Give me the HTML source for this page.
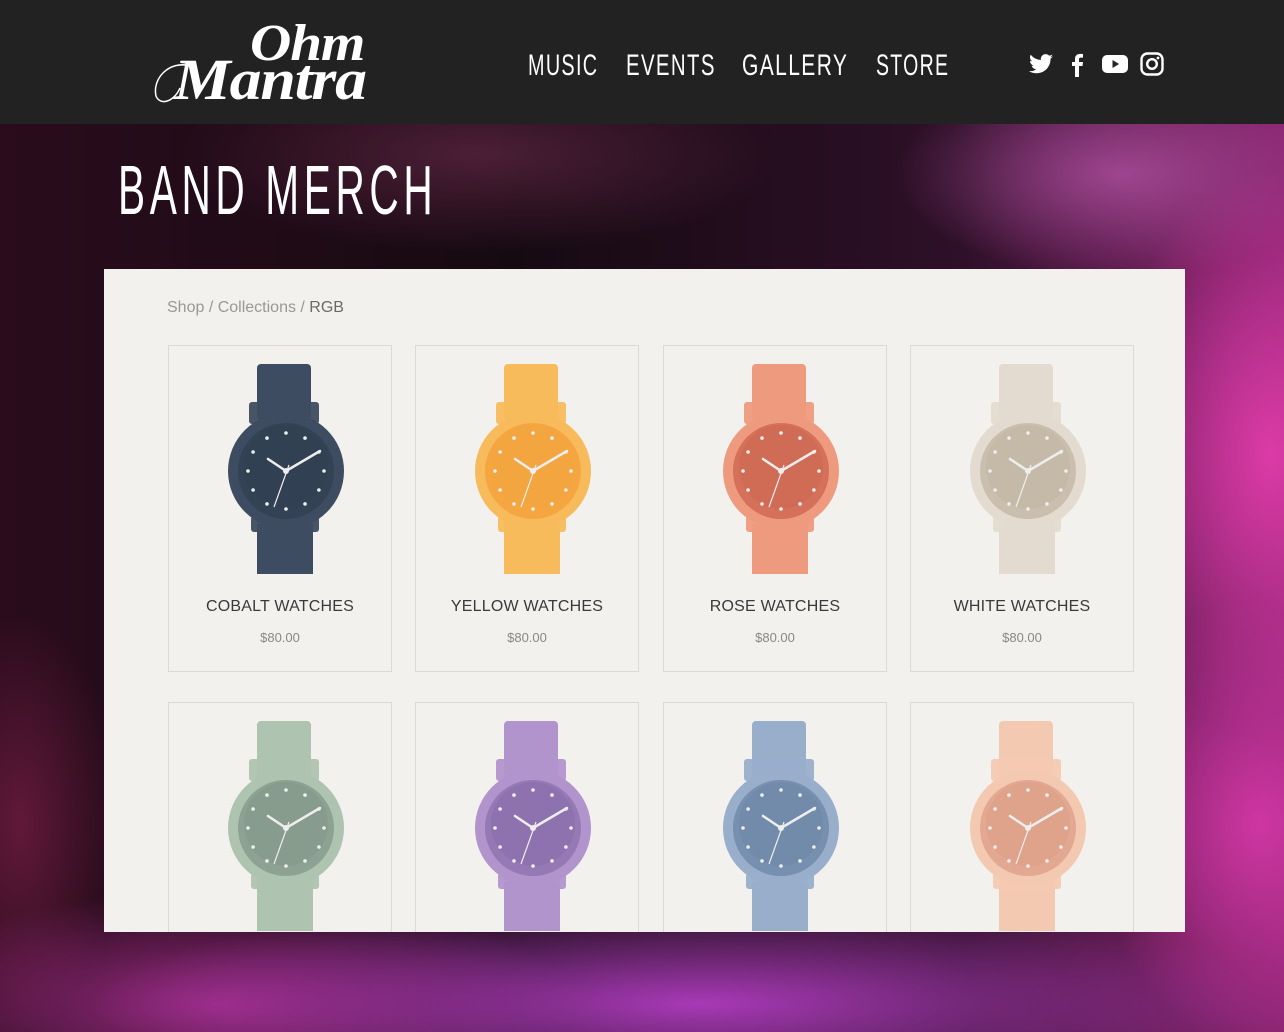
<!DOCTYPE html>
<html><head><meta charset="utf-8">
<style>
*{margin:0;padding:0;box-sizing:border-box}
html,body{width:1284px;height:1032px;overflow:hidden}
body{position:relative;background:#1a0d14;font-family:"Liberation Sans",sans-serif}
#bg{position:absolute;left:0;top:124px;width:1284px;height:908px;
background:
radial-gradient(ellipse 220px 380px at 1270px 330px,rgba(225,60,170,.95),transparent 75%),
radial-gradient(ellipse 220px 300px at 1260px 700px,rgba(210,55,165,.95),transparent 75%),
radial-gradient(ellipse 760px 130px at 700px 880px,rgba(175,60,190,.95),transparent 80%),
radial-gradient(ellipse 450px 140px at 220px 880px,rgba(165,45,140,.9),transparent 80%),
radial-gradient(ellipse 320px 150px at 1120px 50px,rgba(175,80,160,.8),transparent 70%),
radial-gradient(ellipse 400px 130px at 480px 30px,rgba(100,40,70,.7),transparent 75%),
radial-gradient(ellipse 140px 300px at 20px 700px,rgba(120,30,70,.7),transparent 70%),
linear-gradient(90deg,#2a0c1c 0%,#160a12 40%,#2e1028 75%,#8a2470 100%);}
#hdr{position:absolute;left:0;top:0;width:1284px;height:124px;background:#232223}
.logo{position:absolute;color:#fff;font-family:"Liberation Serif",serif;font-style:italic;font-weight:bold;transform-origin:0 0}
.nav{position:absolute;top:49px;color:#fff;font-family:"Liberation Sans",sans-serif;font-size:30px;transform-origin:0 0;letter-spacing:2px}
#title{position:absolute;left:118px;top:150px;color:#fff;font-family:"Liberation Sans",sans-serif;font-size:70px;letter-spacing:8px;transform-origin:0 0;transform:scaleX(.58)}
#panel{position:absolute;left:104px;top:269px;width:1081px;height:663px;background:#f3f1ed;overflow:hidden}
#crumb{position:absolute;left:63px;top:30px;font-size:16px;color:#9a9894}
#crumb b{font-weight:normal;color:#6b6a67}
.card{position:absolute;width:224px;height:327px;border:1.5px solid #dcdad6}
.card svg{position:absolute;left:0;top:0}
.nm{position:absolute;left:0;width:100%;top:252px;text-align:center;font-size:16px;color:#3a3a3a;letter-spacing:.2px}
.pr{position:absolute;left:0;width:100%;top:284px;text-align:center;font-size:13px;color:#8a8884}
</style></head><body>
<div id="hdr">
  <div class="logo" style="left:250px;top:14px;font-size:52px;letter-spacing:-1px;transform:scaleX(1.1)">Ohm</div>
  <div class="logo" style="left:174px;top:46px;font-size:58px;letter-spacing:-1px;transform:scaleX(1.1)">Mantra</div>
  <svg style="position:absolute;left:150px;top:58px" width="50" height="50"><path d="M40 8 C20 2 2 20 6 38 C10 48 24 44 30 30" fill="none" stroke="#fff" stroke-width="1.5"/></svg>
  <div class="nav" style="left:528px;transform:scaleX(.66)">MUSIC</div>
  <div class="nav" style="left:626px;transform:scaleX(.68)">EVENTS</div>
  <div class="nav" style="left:742px;transform:scaleX(.7)">GALLERY</div>
  <div class="nav" style="left:876px;transform:scaleX(.65)">STORE</div>
  <svg style="position:absolute;left:1029px;top:54px" width="24" height="20" viewBox="0 0 24 20"><path fill="#fff" d="M24 2.4c-.9.4-1.8.6-2.8.8 1-.6 1.8-1.6 2.2-2.7-1 .6-2 1-3.1 1.2A4.9 4.9 0 0 0 11.9 6 14 14 0 0 1 1.7.8a4.900 4.900 0 0 0 1.5 6.6c-.8 0-1.6-.3-2.2-.6 0 2.400 1.700 4.400 3.900 4.800-.7.2-1.500.2-2.200.1.6 2 2.400 3.400 4.600 3.400A9.900 9.900 0 0 1 0 17.100 14 14 0 0 0 7.500 19.300c9.100 0 14-7.500 14-14v-.6c1-.7 1.800-1.600 2.500-2.300z"/></svg>
  <svg style="position:absolute;left:1070px;top:53px" width="14" height="24" viewBox="0 0 14 24"><path fill="#fff" d="M9 24V13h3.5l.5-4H9V6.5C9 5.400 9.300 4.600 11 4.600h2V1.100C12.600 1 11.400.9 10 .9 7.100.9 5 2.700 5 6v3H2v4h3v11z"/></svg>
  <svg style="position:absolute;left:1102px;top:54px" width="26" height="20" viewBox="0 0 26 20"><rect x="0" y="1" width="26" height="18" rx="5" fill="#fff"/><path d="M10.5 6v8l6.5-4z" fill="#232223"/></svg>
  <svg style="position:absolute;left:1140px;top:52px" width="24" height="24" viewBox="0 0 24 24"><rect x="1.5" y="1.5" width="21" height="21" rx="6" fill="none" stroke="#fff" stroke-width="2.4"/><circle cx="12" cy="12" r="4.8" fill="none" stroke="#fff" stroke-width="2.4"/><circle cx="18" cy="6" r="1.4" fill="#fff"/></svg>
</div>
<div id="bg"></div>
<div id="title">BAND MERCH</div>
<div id="panel">
  <div id="crumb">Shop / Collections / <b>RGB</b></div>
  <div class="card" style="left:64px;top:76px" data-c="#3d4c60,#344256,#2e3b4e"><div class="nm">COBALT WATCHES</div><div class="pr">$80.00</div></div>
  <div class="card" style="left:311px;top:76px" data-c="#f7bb5c,#f5a640,#f0a23e"><div class="nm">YELLOW WATCHES</div><div class="pr">$80.00</div></div>
  <div class="card" style="left:559px;top:76px" data-c="#ee9a7e,#d5705a,#c96550"><div class="nm">ROSE WATCHES</div><div class="pr">$80.00</div></div>
  <div class="card" style="left:806px;top:76px" data-c="#e3dbcf,#cabfae,#bdb19f"><div class="nm">WHITE WATCHES</div><div class="pr">$80.00</div></div>
  <div class="card" style="left:64px;top:433px" data-c="#aec3b0,#8ea293,#7e9383"></div>
  <div class="card" style="left:311px;top:433px" data-c="#b294cc,#9479b4,#8468a6"></div>
  <div class="card" style="left:559px;top:433px" data-c="#98aecb,#7790b0,#6a83a4"></div>
  <div class="card" style="left:806px;top:433px" data-c="#f4c9b2,#e3a891,#d8977f"></div>
</div>
<script>
document.querySelectorAll('.card').forEach(function(c){
  var k=c.getAttribute('data-c').split(','),a=k[0],b=k[1],d=k[2];
  var cx=117,cy=125,s='';
  s+='<rect x="88" y="18" width="54" height="56" rx="4" fill="'+a+'"/>';
  s+='<rect x="88" y="178" width="56" height="50" fill="'+a+'"/>';
  s+='<rect x="80" y="56" width="70" height="22" rx="3" fill="'+a+'" opacity=".95"/>';
  s+='<rect x="82" y="170" width="68" height="16" rx="3" fill="'+a+'" opacity=".95"/>';
  s+='<circle cx="'+cx+'" cy="'+cy+'" r="58" fill="'+a+'"/>';
  s+='<circle cx="'+cx+'" cy="'+cy+'" r="48" fill="'+b+'"/>';
  s+='<circle cx="'+cx+'" cy="'+(cy-4)+'" r="42" fill="'+d+'" opacity=".35"/>';
  for(var i=0;i<12;i++){var t=i*Math.PI/6;s+='<circle cx="'+(cx+38*Math.sin(t)).toFixed(1)+'" cy="'+(cy-38*Math.cos(t)).toFixed(1)+'" r="1.8" fill="#eee"/>';}
  s+='<path d="M'+cx+' '+cy+' L'+(cx-18)+' '+(cy-12)+' M'+cx+' '+cy+' L'+(cx+34)+' '+(cy-20)+'" stroke="#eee" stroke-width="2.5" stroke-linecap="round"/>';
  s+='<path d="M'+(cx+3)+' '+(cy-6)+' L'+(cx-12)+' '+(cy+36)+'" stroke="#eee" stroke-width="1.2"/>';
  s+='<circle cx="'+cx+'" cy="'+cy+'" r="3" fill="#eee"/>';
  c.insertAdjacentHTML('afterbegin','<svg width="224" height="327">'+s+'</svg>');
});
</script>
</body></html>
